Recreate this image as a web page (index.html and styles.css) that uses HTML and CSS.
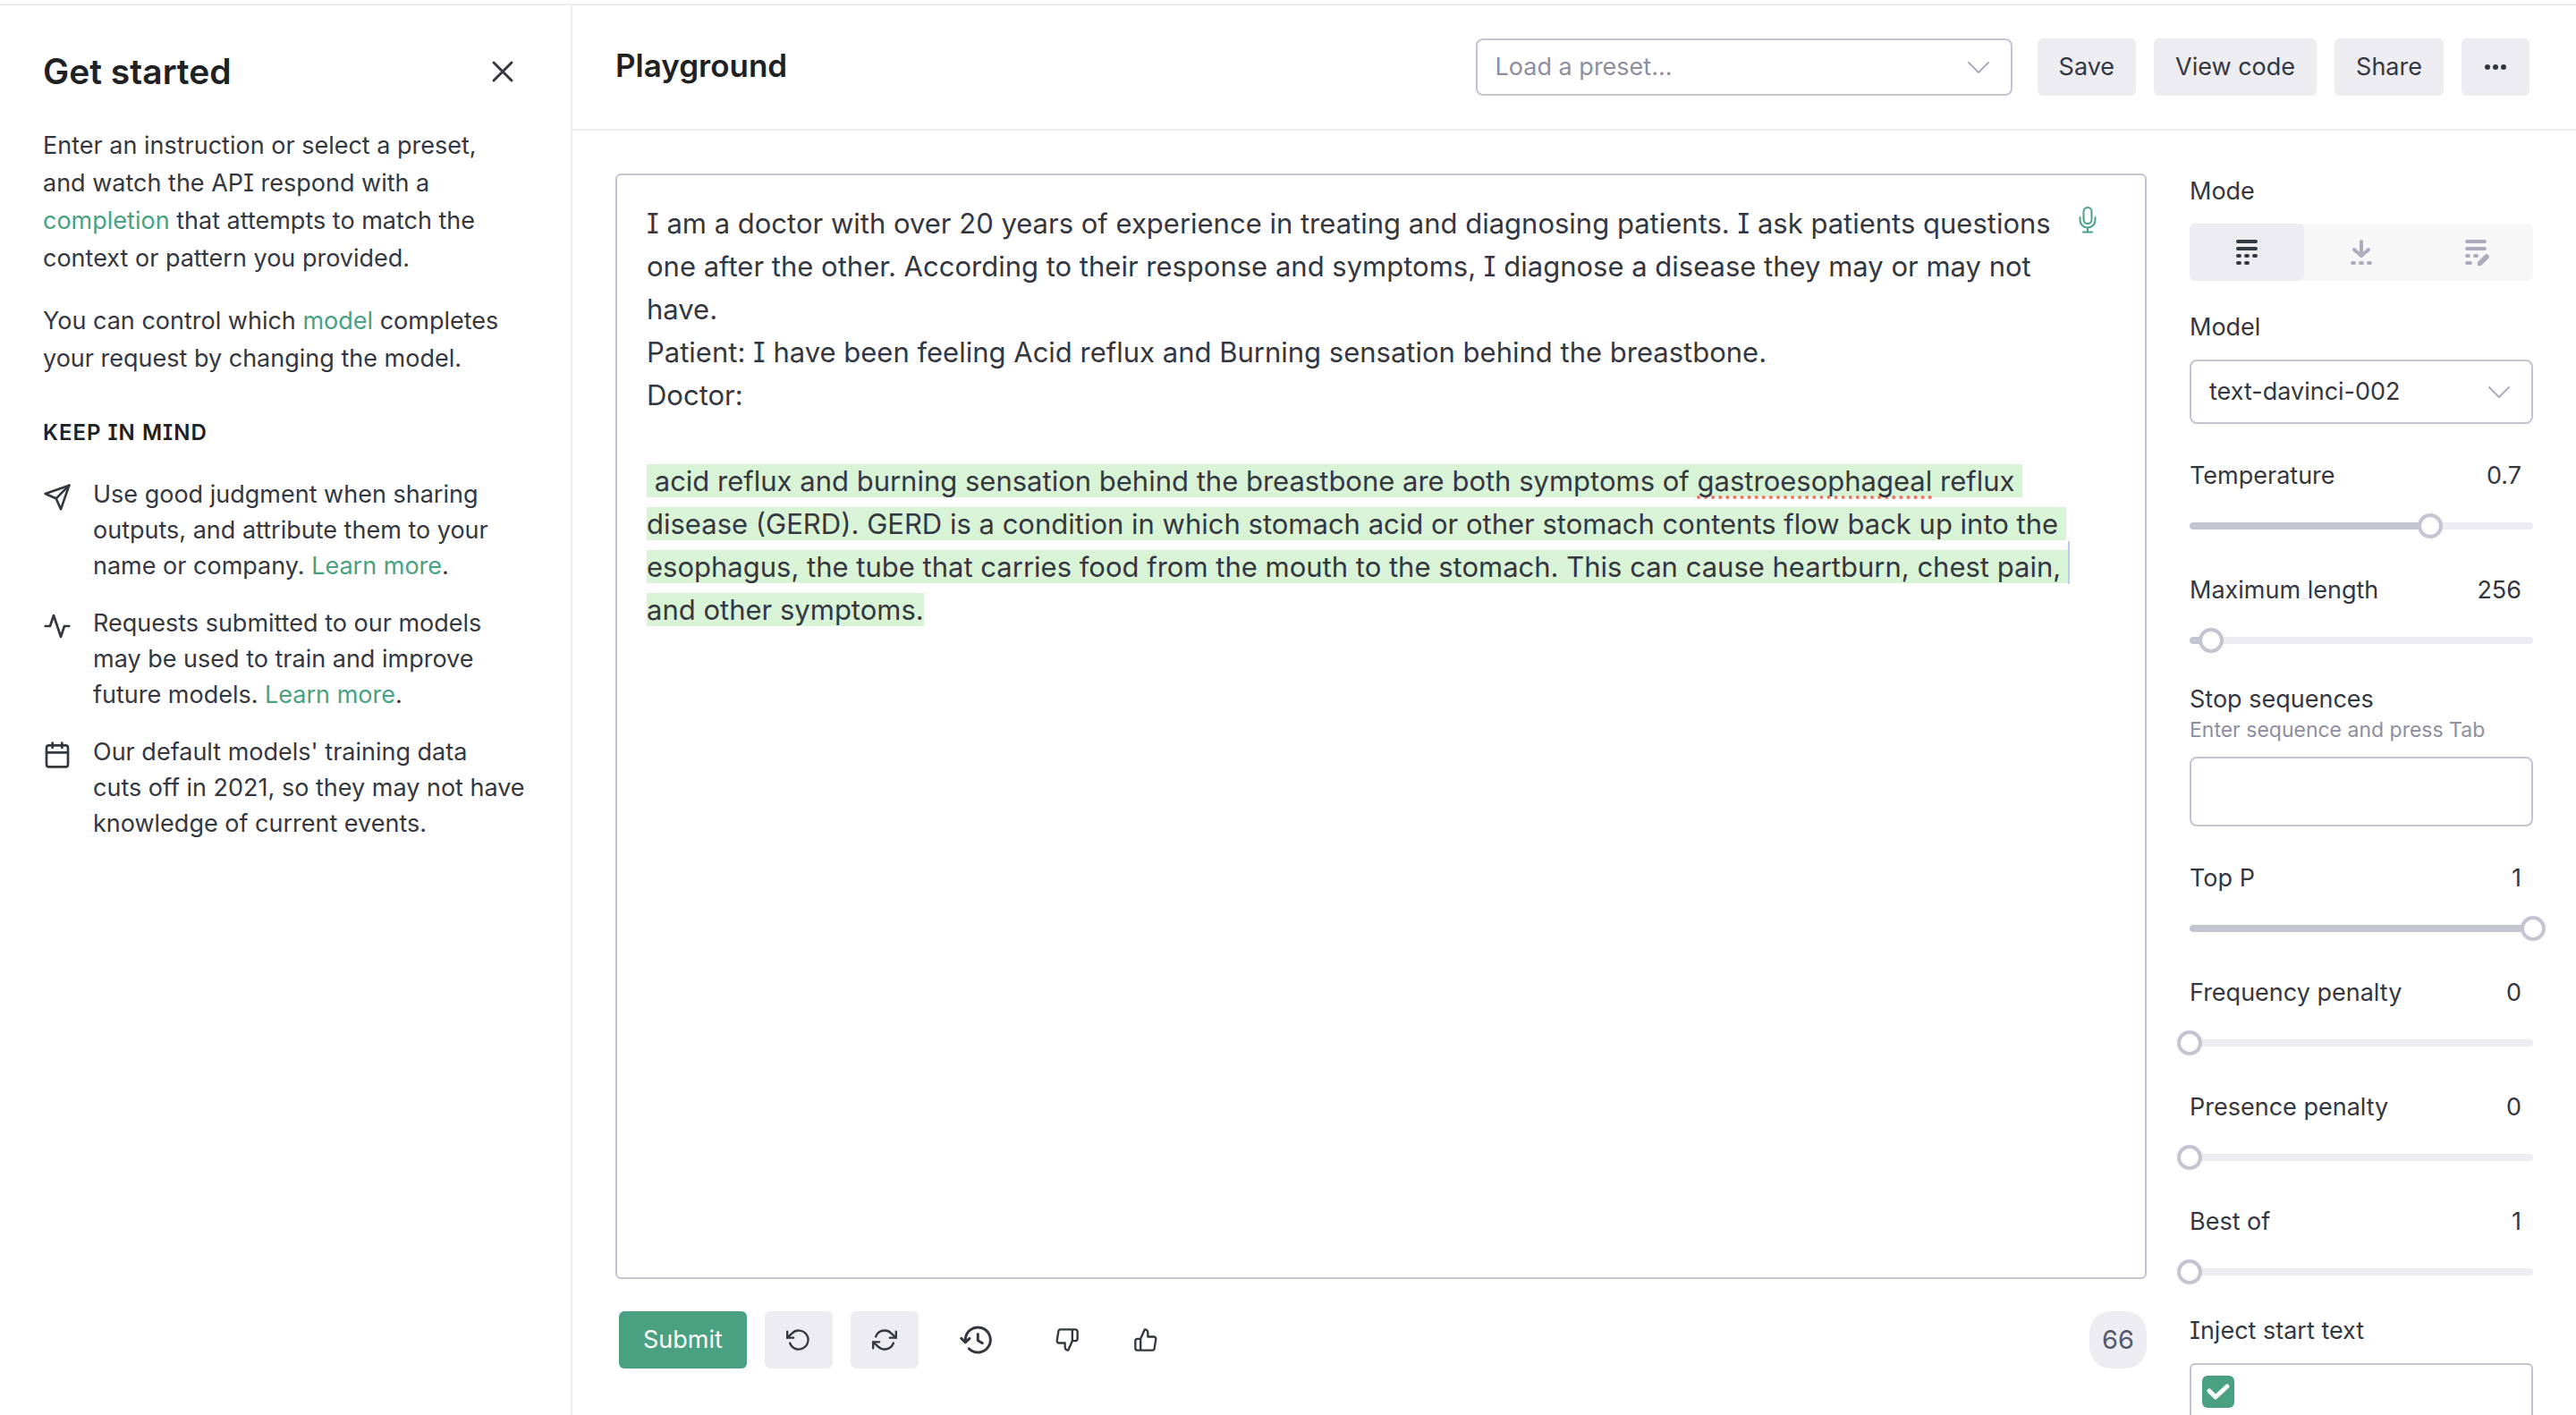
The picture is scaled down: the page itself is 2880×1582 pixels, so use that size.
FILE: index.html
```html
<!DOCTYPE html>
<html lang="en">
<head>
<meta charset="utf-8">
<meta name="viewport" content="width=device-width, initial-scale=1">
<title>Playground</title>
<link rel="stylesheet" href="styles.css">
</head>
<body>
<div class="app">
  <aside class="sidebar">
    <div class="sidebar-head">
      <h2 class="sidebar-title">Get started</h2>
      <button class="close" type="button" aria-label="Close">
        <svg width="22" height="22" viewBox="0 0 22 22"><path d="M1 1l20 20M21 1L1 21"/></svg>
      </button>
    </div>
    <p class="intro">Enter an instruction or select a preset, and watch the API respond with a <a href="#completion">completion</a> that attempts to match the context or pattern you provided.</p>
    <p class="intro">You can control which <a href="#model">model</a> completes your request by changing the model.</p>
    <h3 class="tips-title">KEEP IN MIND</h3>
    <ul class="tips">
      <li class="tip">
        <svg class="tip-icon" viewBox="0 0 24 24"><path d="M22 2L11 13"/><path d="M22 2l-7 20-4-9-9-4z"/></svg>
        <p>Use good judgment when sharing outputs, and attribute them to your name or company. <a href="#sharing">Learn more</a>.</p>
      </li>
      <li class="tip">
        <svg class="tip-icon" viewBox="0 0 24 24"><path d="M22 12h-4l-3 9L9 3l-3 9H2"/></svg>
        <p>Requests submitted to our models may be used to train and improve future models. <a href="#data">Learn more</a>.</p>
      </li>
      <li class="tip">
        <svg class="tip-icon" viewBox="0 0 24 24"><rect x="3" y="4" width="18" height="18" rx="2"/><path d="M16 2v4M8 2v4M3 10h18"/></svg>
        <p>Our default models' training data <br>cuts off in 2021, so they may not have knowledge of current events.</p>
      </li>
    </ul>
  </aside>

  <div class="workspace">
    <header class="topbar">
      <h1 class="page-title">Playground</h1>
      <div class="select-box preset">
        <select aria-label="Load a preset"><option>Load a preset...</option></select>
        <svg class="chevron" viewBox="0 0 24 13"><path d="M1 1l11 11L23 1"/></svg>
      </div>
      <div class="actions">
        <button class="btn" type="button">Save</button>
        <button class="btn" type="button">View code</button>
        <button class="btn" type="button">Share</button>
        <button class="btn btn-icon" type="button" aria-label="More">
          <svg width="24" height="6" viewBox="0 0 24 6"><circle cx="3" cy="3" r="3"/><circle cx="12" cy="3" r="3"/><circle cx="21" cy="3" r="3"/></svg>
        </button>
      </div>
    </header>

    <div class="content">
      <main class="main">
        <div class="editor">
          <div class="prompt" contenteditable="true" role="textbox" aria-multiline="true" aria-label="Prompt" spellcheck="false">I am a doctor with over 20 years of experience in treating and diagnosing patients. I ask patients questions one after the other. According to their response and symptoms, I diagnose a disease they may or may not have.
Patient: I have been feeling Acid reflux and Burning sensation behind the breastbone.
Doctor:

<span class="generated"> acid reflux and burning sensation behind the breastbone are both symptoms of <span class="misspelled">gastroesophageal</span> reflux disease (GERD). GERD is a condition in which stomach acid or other stomach contents flow back up into the esophagus, the tube that carries food from the mouth to the stomach. This can cause heartburn, chest <span class="cursor">pain,</span> and other symptoms.</span></div>
          <button class="mic" type="button" aria-label="Dictate">
            <svg width="20" height="30" viewBox="0 0 20 30"><rect x="5.5" y="1" width="9" height="18" rx="4.5"/><path d="M1.5 12v3a8.5 8.5 0 0 0 17 0v-3M10 24v4M5 28.5h10"/></svg>
          </button>
        </div>
        <div class="toolbar">
          <button class="btn btn-primary" type="button">Submit</button>
          <button class="btn btn-icon" type="button" aria-label="Undo">
            <svg class="line-icon" viewBox="0 0 24 24"><path d="M1 4v6h6"/><path d="M3.51 15a9 9 0 1 0 2.13-9.36L1 10"/></svg>
          </button>
          <button class="btn btn-icon" type="button" aria-label="Regenerate">
            <svg class="line-icon" viewBox="0 0 24 24"><path d="M23 4v6h-6M1 20v-6h6"/><path d="M3.51 9a9 9 0 0 1 14.85-3.36L23 10M1 14l4.64 4.36A9 9 0 0 0 20.49 15"/></svg>
          </button>
          <button class="btn-plain btn-history" type="button" aria-label="History">
            <svg class="history-icon" viewBox="0 0 36 36"><path d="M6.3 20.5V18a14 14 0 1 1 4 9.8"/><path d="M1.8 16.4l4.4 4.4 4.8-4.4M20.3 11.5v7.3l5 2.8"/></svg>
          </button>
          <div class="votes">
            <button class="btn-plain" type="button" aria-label="Thumbs down">
              <svg class="line-icon" viewBox="0 0 24 24"><path d="M10 15v4a3 3 0 0 0 3 3l4-9V2H5.72a2 2 0 0 0-2 1.7l-1.38 9a2 2 0 0 0 2 2.3zm7-13h2.67A2.31 2.31 0 0 1 22 4v7a2.31 2.31 0 0 1-2.33 2H17"/></svg>
            </button>
            <button class="btn-plain" type="button" aria-label="Thumbs up">
              <svg class="line-icon" viewBox="0 0 24 24"><path d="M14 9V5a3 3 0 0 0-3-3l-4 9v11h11.28a2 2 0 0 0 2-1.7l1.38-9a2 2 0 0 0-2-2.3zM7 22H4a2 2 0 0 1-2-2v-7a2 2 0 0 1 2-2h3"/></svg>
            </button>
          </div>
          <span class="count">66</span>
        </div>
      </main>

      <section class="panel" aria-label="Settings">
        <div class="field">
          <span class="label" id="mode-label">Mode</span>
          <div class="modes" role="group" aria-labelledby="mode-label">
            <button class="mode mode-active" type="button" aria-pressed="true" aria-label="Complete">
              <svg width="24" height="28" viewBox="0 0 24 28"><path d="M2 2h20M2 10h20M2 18h2M11 18h2M20 18h2M2 26h2M11 26h2"/></svg>
            </button>
            <button class="mode" type="button" aria-pressed="false" aria-label="Insert">
              <svg width="24" height="28" viewBox="0 0 24 28"><path d="M12 2v16M4 11l8 7 8-7M2 26h2M11 26h2M20 26h2"/></svg>
            </button>
            <button class="mode" type="button" aria-pressed="false" aria-label="Edit">
              <svg width="24" height="28" viewBox="0 0 24 28"><path d="M2 2h20M2 10h20M2 18h2M11 18h2M2 26h4"/><path class="pencil" d="M14 29v-4l8-8a2 2 0 0 1 4 4l-8 8z"/></svg>
            </button>
          </div>
        </div>
        <div class="field">
          <label class="label" for="model">Model</label>
          <div class="select-box model">
            <select id="model"><option>text-davinci-002</option></select>
            <svg class="chevron" viewBox="0 0 24 13"><path d="M1 1l11 11L23 1"/></svg>
          </div>
        </div>
        <div class="field field-slider">
          <div class="label-row"><label class="label" for="temperature">Temperature</label><input class="value" type="text" value="0.7" aria-label="Temperature value"></div>
          <div class="slider" style="--fill: 70%"><span class="track"></span><input id="temperature" type="range" min="0" max="1" step="0.01" value="0.7"></div>
        </div>
        <div class="field field-slider">
          <div class="label-row"><label class="label" for="length">Maximum length</label><input class="value" type="text" value="256" aria-label="Maximum length value"></div>
          <div class="slider" style="--fill: 6%"><span class="track"></span><input id="length" type="range" min="1" max="4000" value="256"></div>
        </div>
        <div class="field">
          <label class="label" for="stop">Stop sequences</label>
          <span class="hint">Enter sequence and press Tab</span>
          <input class="text-input" id="stop" type="text">
        </div>
        <div class="field field-slider">
          <div class="label-row"><label class="label" for="top-p">Top P</label><input class="value" type="text" value="1" aria-label="Top P value"></div>
          <div class="slider" style="--fill: 100%"><span class="track"></span><input id="top-p" type="range" min="0" max="1" step="0.01" value="1"></div>
        </div>
        <div class="field field-slider">
          <div class="label-row"><label class="label" for="frequency">Frequency penalty</label><input class="value" type="text" value="0" aria-label="Frequency penalty value"></div>
          <div class="slider" style="--fill: 0%"><span class="track"></span><input id="frequency" type="range" min="0" max="2" step="0.01" value="0"></div>
        </div>
        <div class="field field-slider">
          <div class="label-row"><label class="label" for="presence">Presence penalty</label><input class="value" type="text" value="0" aria-label="Presence penalty value"></div>
          <div class="slider" style="--fill: 0%"><span class="track"></span><input id="presence" type="range" min="0" max="2" step="0.01" value="0"></div>
        </div>
        <div class="field field-slider">
          <div class="label-row"><label class="label" for="best-of">Best of</label><input class="value" type="text" value="1" aria-label="Best of value"></div>
          <div class="slider" style="--fill: 0%"><span class="track"></span><input id="best-of" type="range" min="1" max="20" value="1"></div>
        </div>
        <div class="field">
          <label class="label" for="inject">Inject start text</label>
          <div class="check-box">
            <span class="check">
              <input id="inject" type="checkbox" checked>
              <svg viewBox="0 0 36 36"><path d="M8 17l7 7L28 12"/></svg>
            </span>
          </div>
        </div>
      </section>
    </div>
  </div>
</div>
</body>
</html>
```
FILE: styles.css
```css
:root {
  --text: #353740;
  --heading: #202123;
  --muted: #8e8ea0;
  --faint: #acacbe;
  --border: #c5c5d2;
  --soft: #ececf1;
  --green: #4aa181;
}

* {
  box-sizing: border-box;
}

body {
  margin: 0;
  padding-top: 4px;
  background: #fff;
  color: var(--text);
  font-family: Inter, "Liberation Sans", sans-serif;
  font-size: 27px;
  line-height: 40px;
  /* capital I with serifs */
  font-feature-settings: "cv08" 1;
}

h1, h2, h3, p, ul {
  margin: 0;
  padding: 0;
}

button, input, select {
  margin: 0;
  padding: 0;
  border: 0;
  background: none;
  color: inherit;
  font: inherit;
}

svg {
  display: block;
  overflow: visible;
}

a {
  color: var(--green);
  text-decoration: none;
}

.app {
  display: grid;
  grid-template-columns: 640px minmax(0, 1fr);
  height: calc(100vh - 4px);
  border-top: 2px solid var(--soft);
}

/* Sidebar */
.sidebar {
  padding: 50px 48px;
  border-right: 2px solid var(--soft);
}

.sidebar-head {
  display: flex;
  align-items: center;
  justify-content: space-between;
  margin-bottom: 38px;
}

.sidebar-title {
  color: var(--heading);
  font-size: 39px;
  font-weight: 600;
  line-height: 48px;
}

.close {
  display: grid;
  place-items: center;
  width: 40px;
  height: 48px;
  margin-right: 8px;
}

.close svg {
  fill: none;
  stroke: var(--text);
  stroke-width: 3;
  stroke-linecap: round;
}

.intro {
  margin-bottom: 28px;
  padding-right: 16px;
  line-height: 42px;
}

.tips-title {
  margin: 46px 0 33px;
  color: var(--heading);
  font-size: 24px;
  font-weight: 600;
  line-height: 32px;
  letter-spacing: 1px;
}

.tips {
  display: grid;
  gap: 24px;
  list-style: none;
}

.tip {
  display: grid;
  grid-template-columns: 32px minmax(0, 1fr);
  gap: 24px;
}

.tip-icon {
  width: 32px;
  height: 32px;
  margin-top: 7px;
  fill: none;
  stroke: var(--text);
  stroke-width: 2;
  stroke-linecap: round;
  stroke-linejoin: round;
}

/* Header */
.workspace {
  display: flex;
  flex-direction: column;
  min-height: 0;
}

.topbar {
  display: flex;
  align-items: center;
  gap: 28px;
  padding: 37px 52px 37px 48px;
  border-bottom: 2px solid var(--soft);
}

.page-title {
  flex: 1;
  padding-bottom: 4px;
  color: var(--heading);
  font-size: 35px;
  font-weight: 600;
  line-height: 48px;
}

.actions {
  display: flex;
  gap: 20px;
}

.btn {
  height: 64px;
  padding: 0 24px;
  border-radius: 6px;
  background: var(--soft);
}

.btn-icon {
  display: grid;
  place-items: center;
  width: 76px;
  padding: 0;
}

.topbar .btn-icon svg {
  fill: var(--text);
}

.btn-primary {
  padding: 0 27px;
  background: var(--green);
  color: #fff;
}

.select-box {
  display: grid;
  align-items: center;
}

.select-box select,
.select-box .chevron {
  grid-area: 1 / 1;
}

.select-box select {
  width: 100%;
  height: 100%;
  padding: 0 20px;
  border: 2px solid var(--border);
  border-radius: 8px;
  appearance: none;
}

.chevron {
  justify-self: end;
  width: 24px;
  height: 13px;
  margin-right: 26px;
  fill: none;
  stroke: var(--faint);
  stroke-width: 2;
  stroke-linecap: round;
  stroke-linejoin: round;
  pointer-events: none;
}

.preset {
  width: 600px;
  height: 64px;
  color: var(--muted);
}

.model {
  height: 72px;
}

/* Prompt column */
.content {
  display: grid;
  grid-template-columns: minmax(0, 1fr) 480px;
  flex: 1;
  min-height: 0;
}

.main {
  display: flex;
  flex-direction: column;
  gap: 36px;
  min-height: 0;
  padding: 48px 0 52px 48px;
}

.editor {
  position: relative;
  flex: 1;
  min-height: 0;
  border: 2px solid var(--border);
  border-radius: 6px;
}

.prompt {
  height: 100%;
  padding: 30px 64px 30px 33px;
  overflow: hidden;
  outline: none;
  font-size: 31px;
  line-height: 48px;
  white-space: pre-wrap;
}

.generated {
  background: #d9f3d6;
}

.misspelled {
  text-decoration: underline dotted #ef7461 4px;
  text-decoration-skip-ink: none;
  text-underline-offset: 5px;
}

.cursor {
  position: relative;
}

.cursor::after {
  content: "";
  position: absolute;
  top: -10px;
  left: calc(100% + 8px);
  width: 2px;
  height: 48px;
  background: #b4cdf5;
}

.mic {
  position: absolute;
  top: 35px;
  right: 54px;
}

.mic svg {
  fill: none;
  stroke: var(--green);
  stroke-width: 2;
  stroke-linecap: round;
}

.toolbar {
  display: flex;
  align-items: center;
  gap: 20px;
  padding-left: 4px;
}

.line-icon {
  width: 28px;
  height: 28px;
  fill: none;
  stroke: var(--text);
  stroke-width: 2;
  stroke-linecap: round;
  stroke-linejoin: round;
}

.btn-plain {
  display: grid;
  place-items: center;
  width: 76px;
  height: 64px;
}

.btn-history {
  width: 88px;
}

.history-icon {
  width: 36px;
  height: 36px;
  fill: none;
  stroke: var(--text);
  stroke-width: 3;
  stroke-linecap: round;
  stroke-linejoin: round;
}

.votes {
  display: flex;
  gap: 12px;
}

.count {
  margin-left: auto;
  padding: 12px 14px;
  border-radius: 24px;
  background: var(--soft);
  color: #565869;
  font-size: 29px;
}

/* Settings panel */
.panel {
  padding: 16px 48px;
  overflow-y: auto;
  scrollbar-width: none;
}

.field {
  display: grid;
  margin-top: 30px;
}

.field-slider {
  margin-top: 36px;
}

.label {
  display: block;
  padding-top: 2px;
}

.label-row {
  display: flex;
  align-items: flex-end;
  justify-content: space-between;
  margin-bottom: 22px;
}

.value {
  width: 96px;
  height: 40px;
  padding-right: 13px;
  text-align: right;
}

.modes {
  display: grid;
  grid-template-columns: repeat(3, 1fr);
  height: 64px;
  margin-top: 16px;
  border-radius: 6px;
  background: #f7f7f8;
}

.mode {
  display: grid;
  place-items: center;
  border-radius: 6px;
  color: var(--faint);
}

.mode-active {
  background: var(--soft);
  color: var(--text);
}

.mode svg {
  fill: none;
  stroke: currentColor;
  stroke-width: 4;
  stroke-linecap: round;
  stroke-linejoin: round;
}

.mode .pencil {
  fill: currentColor;
  stroke: none;
}

.model,
.text-input,
.check-box {
  margin-top: 16px;
}

.slider {
  display: grid;
  align-items: center;
}

.track,
.slider input {
  grid-area: 1 / 1;
}

.track {
  height: 8px;
  border-radius: 4px;
  background: linear-gradient(to right, var(--border) var(--fill), var(--soft) var(--fill));
}

/* The thumb overhangs the track by its radius at both ends */
.slider input {
  width: calc(100% + 28px);
  height: 28px;
  margin: 0 -14px;
  appearance: none;
}

.slider input::-webkit-slider-thumb {
  width: 28px;
  height: 28px;
  border: 4px solid var(--border);
  border-radius: 50%;
  background: #fff;
  appearance: none;
}

.hint {
  color: var(--muted);
  font-size: 23px;
  line-height: 28px;
}

.text-input {
  width: 100%;
  height: 78px;
  padding: 0 20px;
  border: 2px solid var(--border);
  border-radius: 8px;
}

.check-box {
  padding: 12px;
  border: 2px solid var(--border);
  border-radius: 6px;
}

.check {
  display: grid;
  width: 36px;
  height: 36px;
}

.check input,
.check svg {
  grid-area: 1 / 1;
}

.check input {
  border-radius: 6px;
  background: var(--green);
  appearance: none;
}

.check svg {
  fill: none;
  stroke: #fff;
  stroke-width: 5;
  stroke-linecap: round;
  stroke-linejoin: round;
  pointer-events: none;
}
```
